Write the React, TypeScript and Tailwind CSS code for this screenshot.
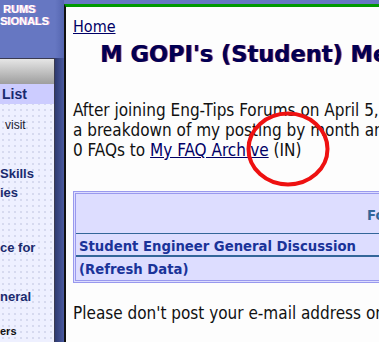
import React from 'react';

const verdana = { fontFamily: '"DejaVu Sans Condensed", "DejaVu Sans", Verdana, sans-serif' };
const verdanaWide = { fontFamily: '"DejaVu Sans", Verdana, sans-serif' };
const arial = { fontFamily: '"Liberation Sans", Arial, sans-serif' };

function SideItem({ text, bold, className }: { text: string; bold?: boolean; className: string }) {
  return (
    <div className={`${className} whitespace-nowrap ${bold ? 'font-bold text-[#1a2a6e]' : 'text-[#1a1a2e]'}`}>
      {text}
    </div>
  );
}

export default function App() {
  return (
    <div className="relative flex h-[342px] w-[379px] overflow-hidden bg-[#6677c2] font-stretch-condensed" style={verdana}>
      {/* left column */}
      <div className="flex w-[55px] shrink-0 flex-col" style={arial}>
        <div className="h-[58px] pt-[4px] text-[11px] font-bold leading-[11px] text-white [text-shadow:1px_0_0_#e8b0d8]">
          <div className="pl-[3px]">RUMS</div>
          <div className="mt-[1px] whitespace-nowrap">SIONALS</div>
        </div>
        <div className="flex-1 border-t border-r border-[#3a3a50] bg-[#eef0ff] bg-[radial-gradient(#d4d8ee_0.7px,transparent_0.8px)] bg-[size:6px_6px]">
          <div className="h-[25px] bg-gradient-to-b from-[#e6e6e6] via-[#c2c2c2] to-[#9e9e9e]" />
          <div className="h-[20px] bg-[#ccccff] pt-[2px] text-[14px] font-bold leading-[16px] text-[#1a2a6e]">
            <span className="pl-[2px]">List</span>
          </div>
          <SideItem text="visit" className="mt-[14px] pl-[5px] text-[12px] leading-[14px]" />
          <SideItem text="Skills" bold className="mt-[32px] text-[13px] leading-[19px]" />
          <SideItem text="ies" bold className="text-[13px] leading-[19px]" />
          <SideItem text="ce for" bold className="mt-[36px] text-[13px] leading-[19px]" />
          <SideItem text="neral" bold className="mt-[30px] text-[13px] leading-[19px]" />
          <SideItem text="ers" bold className="mt-[18px] text-[11px] leading-[14px] !text-[#111]" />
        </div>
      </div>
      {/* shadow strip */}
      <div className="flex w-[9px] shrink-0 flex-col">
        <div className="h-[58px] bg-gradient-to-r from-[#6677c2] to-[#5566b0]" />
        <div className="flex-1 bg-gradient-to-r from-[#2e3a70] to-[#4a5aa0]" />
      </div>
      {/* main panel */}
      <div className="mt-[4px] flex-1 overflow-hidden border-t-[3px] border-l-2 border-t-[#009900] border-l-[#111] bg-[#fdfdfd]">
        <div className="whitespace-nowrap pl-[7px]">
          <div className="pt-[10px] text-[16px] leading-[20px]">
            <a className="text-[#000066] underline">Home</a>
          </div>
          <h1
            className="pl-[27px] pt-[2px] text-[22.5px] font-bold leading-[30px] text-[#000055] font-stretch-normal [text-shadow:1px_0_0_#a03050]"
            style={verdanaWide}
          >
            M GOPI's (Student) Member Profile
          </h1>
          <div className="mt-[31px] text-[17px] leading-[20px] text-[#111]">
            <div>After joining Eng-Tips Forums on April 5, 2009, I have posted</div>
            <div>a breakdown of my posting by month and forum</div>
            <div>
              0 FAQs to <a className="text-[#000066] underline">My FAQ Archive</a> (IN)
            </div>
          </div>
          <div className="mt-[31px] w-[400px] border border-[#9999ee] bg-[#ddddff] p-[1px]">
            <div className="border border-[#9999ee]">
              <div className="h-[40px] border-b border-[#336699] pl-[291px] pt-[12px] text-[14.7px] font-bold leading-[18px] text-[#336699]">
                Forum
              </div>
              <div className="h-[23px] border-b-2 border-[#336699] pl-[3px] pt-[4px] text-[14.7px] font-bold leading-[16px] text-[#1a3399]">
                Student Engineer General Discussion
              </div>
              <div className="h-[23px] pl-[3px] pt-[4px] text-[14.7px] font-bold leading-[16px] text-[#1a3399]">
                (Refresh Data)
              </div>
            </div>
          </div>
          <div className="mt-[20px] text-[17px] leading-[20px] text-[#111]">
            Please don't post your e-mail address or phone number
          </div>
        </div>
      </div>
      {/* red circle annotation */}
      <svg className="pointer-events-none absolute left-[246px] top-[111px]" width="84" height="76" viewBox="0 0 84 76">
        <ellipse cx="42" cy="38" rx="39.5" ry="35.5" fill="none" stroke="#ee1111" strokeWidth="4" />
      </svg>
    </div>
  );
}
